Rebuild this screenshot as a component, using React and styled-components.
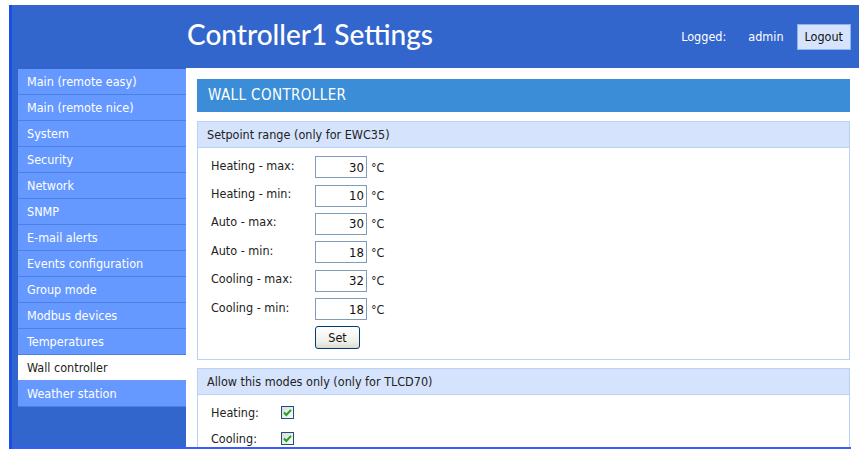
import React from "react";
import styled, { createGlobalStyle } from "styled-components";

const GlobalStyle = createGlobalStyle`
  html, body {
    margin: 0;
    padding: 0;
    background: #fff;
  }
  body {
    font-family: "DejaVu Sans Condensed", "DejaVu Sans", sans-serif;
    font-size: 12.5px;
    color: #222;
  }
`;

const menu = [
  "Main (remote easy)",
  "Main (remote nice)",
  "System",
  "Security",
  "Network",
  "SNMP",
  "E-mail alerts",
  "Events configuration",
  "Group mode",
  "Modbus devices",
  "Temperatures",
  "Wall controller",
  "Weather station",
];

const setpoints = [
  { label: "Heating - max:", value: 30 },
  { label: "Heating - min:", value: 10 },
  { label: "Auto - max:", value: 30 },
  { label: "Auto - min:", value: 18 },
  { label: "Cooling - max:", value: 32 },
  { label: "Cooling - min:", value: 18 },
];

const modes = ["Heating:", "Cooling:"];

const App = () => {
  return (
    <Page>
      <GlobalStyle />
      <Frame>
        <Header>
          <Title>Controller1 Settings</Title>
          <UserBox>
            <span>Logged:</span>
            <UserName>admin</UserName>
            <LogoutButton>Logout</LogoutButton>
          </UserBox>
        </Header>
        <Body>
          <Sidebar>
            {menu.map((item) => (
              <MenuItem key={item} $active={item === "Wall controller"}>
                {item}
              </MenuItem>
            ))}
          </Sidebar>
          <Main>
            <PanelTitle>WALL CONTROLLER</PanelTitle>
            <Section>
              <SectionHead>Setpoint range (only for EWC35)</SectionHead>
              <SectionBody>
                {setpoints.map((row) => (
                  <FieldRow key={row.label}>
                    <Label>{row.label}</Label>
                    <NumberInput defaultValue={row.value} />
                    <Unit>°C</Unit>
                  </FieldRow>
                ))}
                <ButtonRow>
                  <SetButton>Set</SetButton>
                </ButtonRow>
              </SectionBody>
            </Section>
            <Section>
              <SectionHead>Allow this modes only (only for TLCD70)</SectionHead>
              <SectionBody $compact>
                {modes.map((m) => (
                  <CheckRow key={m}>
                    <CheckLabel>{m}</CheckLabel>
                    <CheckBox>
                      <svg width="9" height="9" viewBox="0 0 9 9">
                        <path
                          d="M1 4.5 L3.3 7 L8 1.8"
                          fill="none"
                          stroke="#21a121"
                          strokeWidth="2"
                        />
                      </svg>
                    </CheckBox>
                  </CheckRow>
                ))}
              </SectionBody>
            </Section>
          </Main>
        </Body>
      </Frame>
    </Page>
  );
};

export default App;

const Page = styled.div`
  padding: 5px 0 0 9px;
  width: 850px;
  height: 444px;
  overflow: hidden;
`;

const Frame = styled.div`
  border-left: 3px solid #1c4ee6;
  height: 100%;
  display: flex;
  flex-direction: column;
`;

const Header = styled.div`
  height: 63px;
  flex-shrink: 0;
  background: #3366cc;
  display: flex;
  align-items: center;
  padding: 0 8px 0 175px;
`;

const Title = styled.h1`
  margin: 0 0 6px;
  font-family: Lato, "Open Sans", sans-serif;
  font-weight: 500;
  font-size: 28px;
  color: #fff;
`;

const UserBox = styled.div`
  margin-left: auto;
  display: flex;
  align-items: center;
  color: #fff;
  font-size: 12.5px;
`;

const UserName = styled.span`
  margin: 0 13px 0 22px;
`;

const LogoutButton = styled.button`
  font-family: inherit;
  font-size: 12.5px;
  color: #111;
  background: #d5e4fc;
  border: 1px solid #8fb3f0;
  height: 26px;
  padding: 0 7px;
`;

const Body = styled.div`
  flex: 1;
  display: flex;
  margin-right: 8px;
  border-bottom: 2px solid #3a5cff;
  overflow: hidden;
`;

const Sidebar = styled.div`
  width: 168px;
  padding: 1px 0 0 6px;
  background: #3366cc;
  flex-shrink: 0;
`;

const MenuItem = styled.div`
  height: 25px;
  line-height: 25px;
  padding-left: 9px;
  border-bottom: 1px solid ${(p) => (p.$active ? "#6c9af0" : "#4d80e4")};
  background: ${(p) => (p.$active ? "#fff" : "#6699ff")};
  color: ${(p) => (p.$active ? "#222" : "#fff")};
  white-space: nowrap;
`;

const Main = styled.div`
  flex: 1;
  background: #fff;
  padding: 11px 1px 0 11px;
  display: flex;
  flex-direction: column;
  gap: 8px;
`;

const PanelTitle = styled.div`
  height: 33px;
  line-height: 33px;
  background: #3a8dd6;
  color: #fff;
  font-size: 15px;
  letter-spacing: 0.4px;
  padding-left: 11px;
  margin-bottom: 1px;
`;

const Section = styled.div`
  border: 1px solid #b9d0f7;
  flex-shrink: 0;
`;

const SectionHead = styled.div`
  height: 25px;
  line-height: 25px;
  background: #d5e4fc;
  border-bottom: 1px solid #b9d0f7;
  padding-left: 9px;
`;

const SectionBody = styled.div`
  padding: ${(p) => (p.$compact ? "4px 0 0 13px" : "5px 0 10px 13px")};
`;

const FieldRow = styled.div`
  display: flex;
  align-items: center;
  height: 28.4px;
`;

const Label = styled.span`
  width: 104px;
  margin-top: -4px;
`;

const NumberInput = styled.input`
  box-sizing: border-box;
  width: 52px;
  height: 22px;
  border: 1px solid #7f9db9;
  text-align: right;
  font-family: inherit;
  font-size: 13px;
  padding: 0 2px;
  color: #111;
`;

const Unit = styled.span`
  margin-left: 4px;
`;

const ButtonRow = styled.div`
  padding: 3px 0 0 104px;
`;

const SetButton = styled.button`
  width: 45px;
  height: 23px;
  border: 1px solid #003c74;
  border-radius: 3px;
  background: linear-gradient(#ffffff, #f0f0ea 70%, #dcdad0);
  font-family: inherit;
  font-size: 12.5px;
  color: #111;
  padding: 0;
`;

const CheckRow = styled.div`
  display: flex;
  align-items: center;
  height: 26px;
`;

const CheckLabel = styled.span`
  width: 70px;
`;

const CheckBox = styled.span`
  box-sizing: border-box;
  width: 13px;
  height: 13px;
  border: 1px solid #1c5180;
  background: linear-gradient(135deg, #dcdcd7, #fbfbf9);
  display: flex;
  align-items: center;
  justify-content: center;
`;
